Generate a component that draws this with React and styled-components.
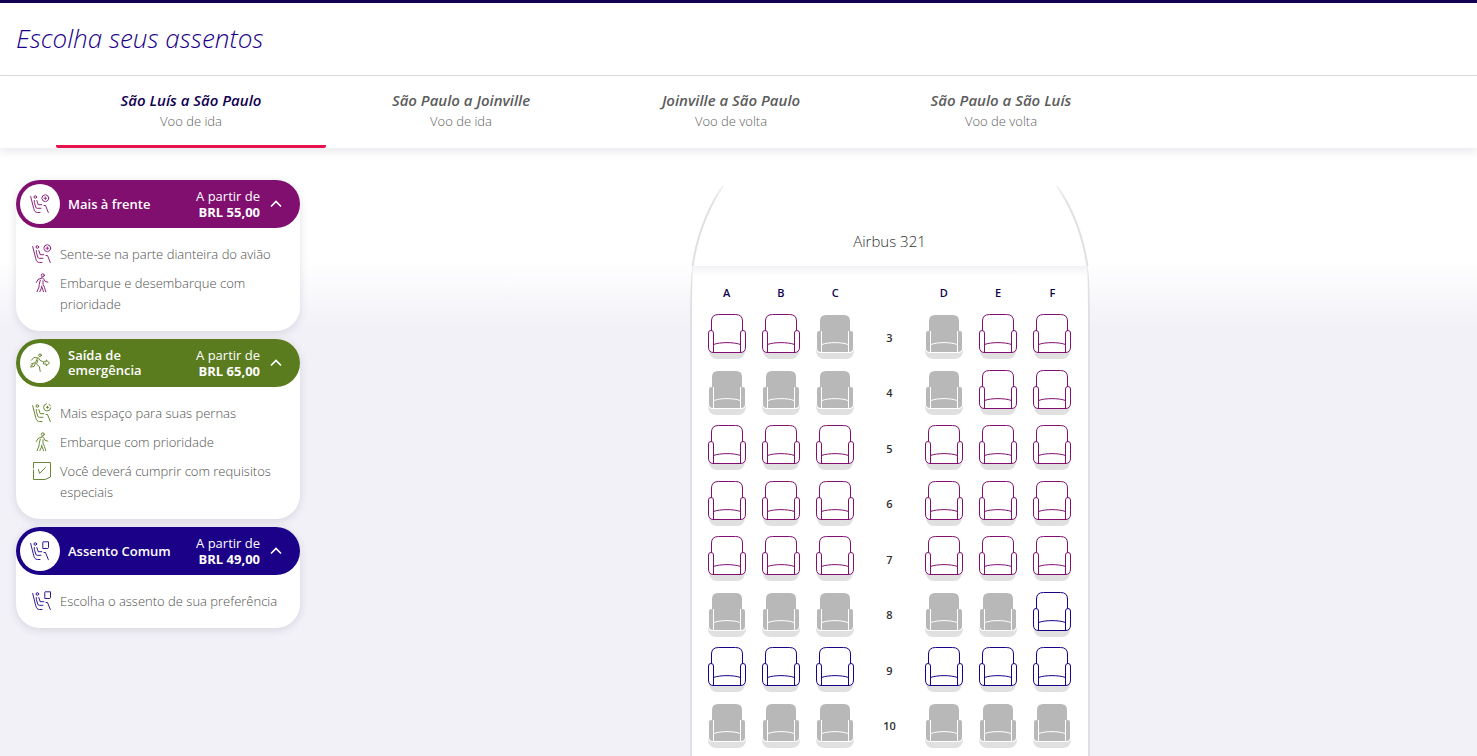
import React, { useState } from "react";
import styled, { createGlobalStyle } from "styled-components";

const FLIGHTS = [
  { route: "São Luís a São Paulo", leg: "Voo de ida" },
  { route: "São Paulo a Joinville", leg: "Voo de ida" },
  { route: "Joinville a São Paulo", leg: "Voo de volta" },
  { route: "São Paulo a São Luís", leg: "Voo de volta" },
];

const CATEGORIES = [
  {
    name: "Mais à frente",
    price: "BRL 55,00",
    color: "#800f70",
    icon: "front",
    benefits: [
      { icon: "front", text: "Sente-se na parte dianteira do avião" },
      { icon: "walk", text: "Embarque e desembarque com prioridade" },
    ],
  },
  {
    name: "Saída de emergência",
    price: "BRL 65,00",
    color: "#5b7b1f",
    icon: "exit",
    benefits: [
      { icon: "legroom", text: "Mais espaço para suas pernas" },
      { icon: "walk", text: "Embarque com prioridade" },
      { icon: "check", text: "Você deverá cumprir com requisitos especiais" },
    ],
  },
  {
    name: "Assento Comum",
    price: "BRL 49,00",
    color: "#1b0088",
    icon: "window",
    benefits: [{ icon: "window", text: "Escolha o assento de sua preferência" }],
  },
];

const COLUMNS = ["A", "B", "C", "", "D", "E", "F"];

// p = mais à frente, c = comum, x = ocupado
const ROWS = [
  { number: 3, seats: "ppx xpp" },
  { number: 4, seats: "xxx xpp" },
  { number: 5, seats: "ppp ppp" },
  { number: 6, seats: "ppp ppp" },
  { number: 7, seats: "ppp ppp" },
  { number: 8, seats: "xxx xxc" },
  { number: 9, seats: "ccc ccc" },
  { number: 10, seats: "xxx xxx" },
];

const SEAT_COLORS = { p: "#800f70", c: "#1b0088" };

function Passenger() {
  return (
    <>
      <path d="M.7 2.500l3 12c.7 2.700 1.700 4 3.800 4H10" />
      <circle cx="5.300" cy="3" r="1.300" />
      <path d="M4.300 6.500v1.800l1.500 4.900c.2.800.7 1.100 1.500 1.100H11M6.800 6.500l1.400 4.200h3.600M14 11.500h1.500l2.800 7" />
    </>
  );
}

function Icon({ type }) {
  return (
    <svg width="20" height="20" viewBox="0 0 20 20" fill="none" stroke="currentColor" strokeWidth="0.9" strokeLinecap="round" strokeLinejoin="round" aria-hidden="true">
      {type === "front" && (
        <>
          <Passenger />
          <circle cx="15.300" cy="4.200" r="3.500" strokeDasharray="4.600 1" />
          <path d="M15.300 2.800v3M13.900 4.200h2.800" strokeWidth="0.8" />
        </>
      )}
      {type === "legroom" && (
        <>
          <Passenger />
          <path d="M14.400.8a3.600 3.600 0 1 0 4.300 4.200M17 1.300a3.600 3.600 0 0 1 1.500 1.600M15.500 3.300v2M14.500 4.300h2" />
        </>
      )}
      {type === "window" && (
        <>
          <Passenger />
          <path d="M13.500.8h5v5.800l-.7.9h-5V1.700z" />
        </>
      )}
      {type === "walk" && (
        <>
          <circle cx="10.800" cy="2.300" r="1.500" />
          <path d="M9.500 5L6 6.500 4.300 9.500M9.500 5c1.400-.3 2.200.2 2.600 1.400l.8 1.800 3 1M8.300 7.200L7.200 11.500 7 14l-2 4.700M11 7.800v3.400l1.500 3.300 1.300 4.300M9.800 13l-.4 2.200-1.600 3.500M10 14.500l1.500 4.200" />
        </>
      )}
      {type === "exit" && (
        <>
          <circle cx="10" cy="2.200" r="1.300" />
          <path d="M1.500 7.200l2.300-2.700 3.900.300-2.200 4.700-4.500 1.500M8.600 4.800l1.500 2.600 2.400 1.100M7.900 7l-1.300 3.900 2.800 3 .8 4.600M5.300 10.500L4 13.500l-3.500.500M3 11.500L1 13" />
          <path d="M13.800 8.800h2.400V6.900l3.300 3-3.300 3v-1.900h-2.400z" />
        </>
      )}
      {type === "check" && (
        <>
          <path d="M1.500 7V1.500h17v14.500l-5.500 2.500H1.500V9" />
          <path d="M6.500 8.500l1 4 6-6" />
        </>
      )}
    </svg>
  );
}

function Chevron() {
  return (
    <svg width="16" height="16" viewBox="0 0 16 16" fill="none" stroke="currentColor" strokeWidth="1.600" aria-hidden="true">
      <path d="M3 10.500l5-5 5 5" />
    </svg>
  );
}

function SeatDrawing({ kind }) {
  if (kind === "x") {
    return (
      <svg width="38" height="45" viewBox="0 0 38 45" aria-hidden="true">
        <path d="M0 35h38v2a8 8 0 0 1-8 8H8a8 8 0 0 1-8-8z" fill="#e0e0e0" />
        <path d="M0 22h38v12q0 5-5 5H5q-5 0-5-5z" fill="#fff" />
        <path d="M4 18V7q0-6 6-6h18q6 0 6 6v11l-2 2v18H6V20z" fill="#b8b8b8" />
        <path d="M1 19q0-2 2-2t2 2v19q-4 0-4-4zM33 19q0-2 2-2t2 2v15q0 4-4 4z" fill="#b8b8b8" />
        <path d="M5.500 38V17M32.500 38V17M6 30.500C12 28 26 28 32 30.500" fill="none" stroke="#fff" />
      </svg>
    );
  }
  return (
    <svg width="38" height="45" viewBox="0 0 38 45" fill="#fff" stroke={SEAT_COLORS[kind]} aria-hidden="true">
      <path d="M1 36h36v1a8 8 0 0 1-8 8H9a8 8 0 0 1-8-8z" fill="#e0e0e0" stroke="none" />
      <path d="M3.500 18V7q0-6.500 7-6.500h17q7 0 7 6.500v11l-2 20.500h-27z" />
      <path d="M.5 19q0-2.500 2.500-2.500T5.500 19v19.500q-5 0-5-5.500zM32.500 19q0-2.500 2.500-2.500t2.500 2.500v14q0 5.500-5 5.500z" />
      <path d="M5.500 30.500C12 28 26 28 32.500 30.500" fill="none" />
      <path d="M5 38.500h28" />
    </svg>
  );
}

function CategoryCard({ category }) {
  const [open, setOpen] = useState(true);
  return (
    <Card>
      <CardHeader type="button" $color={category.color} aria-expanded={open} onClick={() => setOpen(!open)}>
        <IconCircle $color={category.color}>
          <Icon type={category.icon} />
        </IconCircle>
        <CardName>{category.name}</CardName>
        <Price>
          A partir de
          <strong>{category.price}</strong>
        </Price>
        <ChevronBox $open={open}>
          <Chevron />
        </ChevronBox>
      </CardHeader>
      {open && (
        <Benefits>
          {category.benefits.map((benefit) => (
            <Benefit key={benefit.text} $color={category.color}>
              <Icon type={benefit.icon} />
              <span>{benefit.text}</span>
            </Benefit>
          ))}
        </Benefits>
      )}
    </Card>
  );
}

function App() {
  const [activeFlight, setActiveFlight] = useState(0);

  return (
    <Page>
      <GlobalStyle />
      <Header>
        <Title>Escolha seus assentos</Title>
      </Header>
      <Tabs aria-label="Voos">
        {FLIGHTS.map((flight, index) => (
          <Tab key={flight.route} type="button" $active={index === activeFlight} onClick={() => setActiveFlight(index)}>
            <Route $active={index === activeFlight}>{flight.route}</Route>
            <Leg>{flight.leg}</Leg>
          </Tab>
        ))}
      </Tabs>
      <Content>
        <Sidebar>
          {CATEGORIES.map((category) => (
            <CategoryCard key={category.name} category={category} />
          ))}
        </Sidebar>
        <CabinArea>
          <Fuselage>
            <Nose>
              <NoseOutline viewBox="0 0 400 80" fill="none" stroke="url(#noseFade)" strokeWidth="2" aria-hidden="true">
                <defs>
                  <linearGradient id="noseFade" gradientUnits="userSpaceOnUse" x1="0" y1="0" x2="0" y2="80">
                    <stop offset="0" stopColor="#e0e0e3" stopOpacity="0.4" />
                    <stop offset="0.200" stopColor="#e0e0e3" />
                  </linearGradient>
                </defs>
                <path d="M33.500-1C18 22 7 48 2.500 81M366.500-1C382 22 393 48 397.500 81" />
              </NoseOutline>
              <Aircraft>Airbus 321</Aircraft>
            </Nose>
            <Cabin>
              <ColumnNames>
                {COLUMNS.map((column, index) => (
                  <span key={index}>{column}</span>
                ))}
              </ColumnNames>
              <SeatRows>
                {ROWS.map((row) => (
                  <SeatRow key={row.number}>
                    {row.seats.split("").map((kind, index) =>
                      kind === " " ? (
                        <RowNumber key={index}>{row.number}</RowNumber>
                      ) : (
                        <Seat key={index} type="button" disabled={kind === "x"} aria-label={`${row.number}${COLUMNS[index]}`}>
                          <SeatDrawing kind={kind} />
                        </Seat>
                      )
                    )}
                  </SeatRow>
                ))}
              </SeatRows>
            </Cabin>
          </Fuselage>
        </CabinArea>
      </Content>
    </Page>
  );
}

export default App;

const GlobalStyle = createGlobalStyle`
* {
  box-sizing: border-box;
}
body {
  margin: 0;
  font-family: "Open Sans", "Noto Sans", sans-serif;
  color: #505050;
}
button {
  font-family: inherit;
  border: 0;
  padding: 0;
  background: none;
  cursor: pointer;
}
`;

const Page = styled.div`
  min-height: 100vh;
  display: flex;
  flex-direction: column;
  border-top: 3px solid #10004f;
`;

const Header = styled.header`
  height: 73px;
  padding: 0 16px 2px;
  display: flex;
  align-items: center;
  background: #fff;
  border-bottom: 1px solid #dedee0;
`;

const Title = styled.h1`
  margin: 0;
  font-size: 26px;
  font-weight: 300;
  font-style: italic;
  color: #1b0088;
`;

const Tabs = styled.nav`
  display: flex;
  height: 72px;
  padding-left: 56px;
  background: #fff;
  box-shadow: 0 4px 8px rgba(48, 48, 90, 0.1);
`;

const Tab = styled.button`
  flex: 0 1 270px;
  display: flex;
  flex-direction: column;
  align-items: center;
  padding-top: 14px;
  border-bottom: 3px solid ${(props) => (props.$active ? "#e8114b" : "transparent")};
  border-radius: 2px;
`;

const Route = styled.span`
  font-size: 15px;
  line-height: 21px;
  font-weight: 600;
  font-style: italic;
  color: ${(props) => (props.$active ? "#10004f" : "#5c5c5c")};
`;

const Leg = styled.span`
  font-size: 13px;
  line-height: 21px;
  font-weight: 350;
  color: #626262;
`;

const Content = styled.main`
  flex: 1;
  display: flex;
  background: linear-gradient(transparent 112px, #f2f1f7 180px);
`;

const Sidebar = styled.aside`
  flex: 0 0 302px;
  display: flex;
  flex-direction: column;
  gap: 8px;
  padding: 32px 2px 32px 16px;
`;

const Card = styled.section`
  border-radius: 24px;
  background: #fff;
  box-shadow: 0 2px 8px rgba(48, 48, 90, 0.14);
`;

const CardHeader = styled.button`
  width: 100%;
  height: 48px;
  display: flex;
  align-items: center;
  padding: 0 16px 0 4px;
  border-radius: 24px;
  background: ${(props) => props.$color};
  color: #fff;
  text-align: left;
`;

const IconCircle = styled.span`
  width: 40px;
  height: 40px;
  display: flex;
  align-items: center;
  justify-content: center;
  border-radius: 50%;
  background: #fff;
  color: ${(props) => props.$color};
`;

const CardName = styled.span`
  flex: 1;
  padding: 0 12px 0 8px;
  font-size: 13px;
  line-height: 15px;
  font-weight: 650;
`;

const Price = styled.span`
  display: flex;
  flex-direction: column;
  font-size: 13px;
  line-height: 16px;
  text-align: right;

  strong {
    font-weight: 700;
  }
`;

const ChevronBox = styled.span`
  display: flex;
  margin-left: 8px;
  transform: ${(props) => (props.$open ? "none" : "rotate(180deg)")};
`;

const Benefits = styled.ul`
  list-style: none;
  margin: 0;
  padding: 16px 12px 16px 16px;
  display: flex;
  flex-direction: column;
  gap: 8px;
`;

const Benefit = styled.li`
  display: flex;
  gap: 8px;
  font-size: 13px;
  line-height: 21px;
  font-weight: 350;

  svg {
    flex: none;
    color: ${(props) => props.$color};
  }
`;

const CabinArea = styled.div`
  flex: 1;
  display: flex;
  justify-content: center;
  padding-top: 38px;
`;

const Fuselage = styled.div`
  width: 400px;
  display: flex;
  flex-direction: column;
`;

const Nose = styled.div`
  position: relative;
  height: 80px;
  padding-top: 43px;
  text-align: center;
`;

const NoseOutline = styled.svg`
  position: absolute;
  inset: 0;
`;

const Aircraft = styled.p`
  margin: 0;
  font-size: 15px;
  line-height: 24px;
  font-weight: 350;
  color: #303030;
`;

const Cabin = styled.div`
  flex: 1;
  padding: 10px 8px 0;
  border: solid #e0e0e3;
  border-width: 0 2px;
  border-radius: 3px 3px 0 0 / 60px 60px 0 0;
  background: linear-gradient(#f2f1f5, #fff 10px);
`;

const ColumnNames = styled.div`
  display: grid;
  grid-template-columns: repeat(7, 1fr);
  font-size: 11px;
  line-height: 34px;
  font-weight: 600;
  text-align: center;
  color: #10004f;
`;

const SeatRows = styled.div`
  height: 444px;
  display: grid;
  grid-template-rows: repeat(8, 1fr);
`;

const SeatRow = styled.div`
  display: grid;
  grid-template-columns: repeat(7, 1fr);
  align-items: center;
`;

const Seat = styled.button`
  display: flex;
  justify-content: center;
  padding-bottom: 2px;
`;

const RowNumber = styled.span`
  font-size: 11px;
  line-height: 16px;
  font-weight: 600;
  text-align: center;
  color: #303030;
`;
